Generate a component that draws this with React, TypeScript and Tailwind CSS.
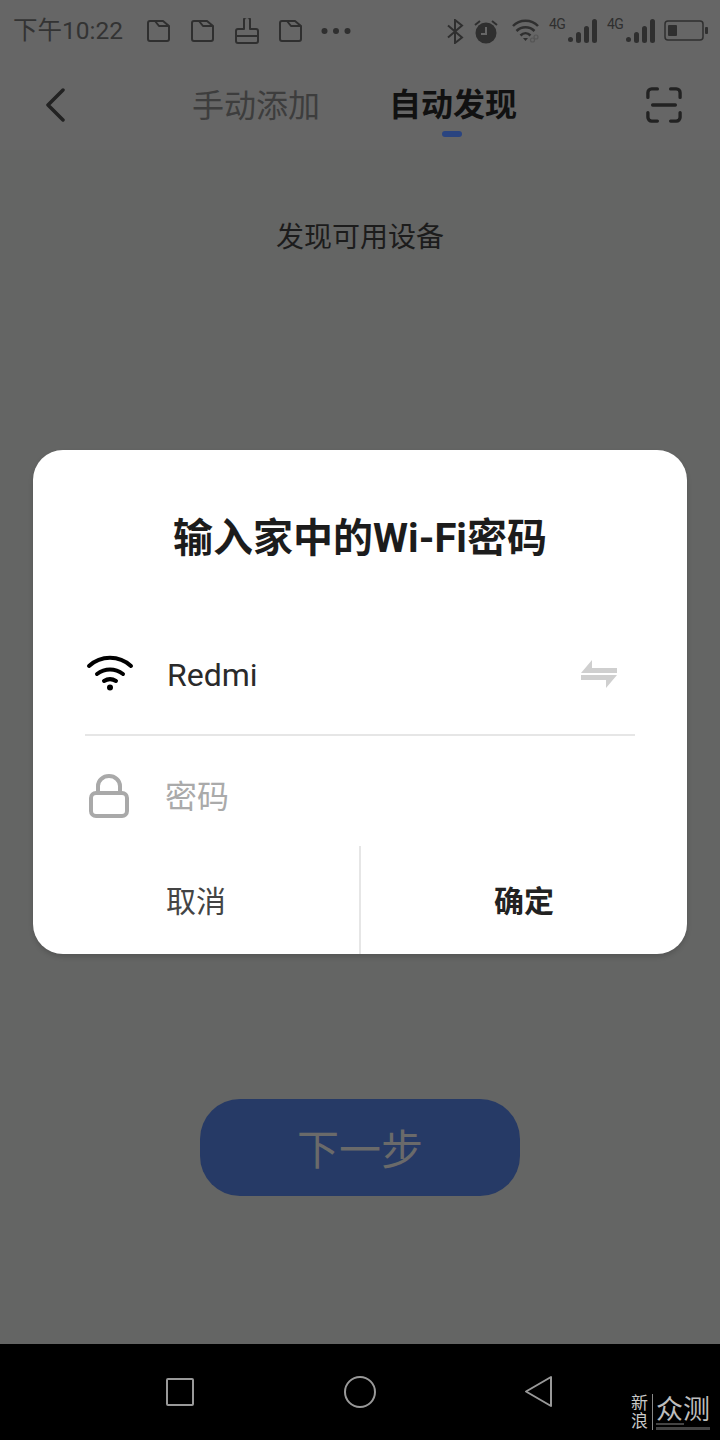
const font = "[font-family:Roboto,'Noto_Sans_CJK_SC',sans-serif]"

function Folder() {
  return (
    <svg width="24" height="22" viewBox="0 0 24 22" fill="none" stroke="#2f2f2f" strokeWidth="2" strokeLinejoin="round">
      <path d="M3 1h13l6 5v13a2 2 0 0 1-2 2H3a2 2 0 0 1-2-2V3a2 2 0 0 1 2-2z" />
      <path d="M8 1l4 5h10" />
    </svg>
  )
}

function Brush() {
  return (
    <svg width="24" height="26" viewBox="0 0 24 26" fill="none" stroke="#2f2f2f" strokeWidth="2" strokeLinejoin="round">
      <path d="M9 2a3 3 0 0 1 6 0v9h6a2 2 0 0 1 2 2v10a2 2 0 0 1-2 2H3a2 2 0 0 1-2-2V13a2 2 0 0 1 2-2h6z" />
      <path d="M1 18h22" />
    </svg>
  )
}

function Signal() {
  return (
    <svg width="29" height="24" viewBox="0 0 29 24" fill="#2f2f2f">
      <circle cx="2.500" cy="20.500" r="2.500" />
      <rect x="8" y="13" width="5" height="11" rx="2.500" />
      <rect x="16" y="7" width="5" height="17" rx="2.500" />
      <rect x="24" y="0" width="5" height="24" rx="2.500" />
    </svg>
  )
}

function Four() {
  return <span className="mr-[3px] w-[16px] -translate-y-[7px] text-[14px] leading-none tracking-[-0.5px] text-[#2f2f2f]">4G</span>
}

function StatusBar() {
  return (
    <div className="flex h-[60px] items-center justify-between bg-[#666] pl-[13px] pr-[12px] pt-[2px]">
      <div className="flex items-center gap-[20px]">
        <span className="mr-[4px] text-[24.5px] leading-none text-[#333]">下午10:22</span>
        <Folder />
        <Folder />
        <Brush />
        <Folder />
        <svg width="30" height="8" viewBox="0 0 30 8" fill="#2f2f2f" className="-ml-[2px]">
          <circle cx="3.500" cy="4" r="3" />
          <circle cx="15" cy="4" r="3" />
          <circle cx="26.500" cy="4" r="3" />
        </svg>
      </div>
      <div className="flex items-center">
        <svg width="18" height="25" viewBox="0 0 18 25" fill="none" stroke="#2f2f2f" strokeWidth="2">
          <path d="M2 6.500l14 12L9 24V1l7 5.500L2 18.500" />
        </svg>
        <svg width="24" height="25" viewBox="0 0 24 25" className="ml-[10px]">
          <circle cx="12" cy="14" r="10.500" fill="#2f2f2f" />
          <path d="M12 8v7H7" fill="none" stroke="#666" strokeWidth="2" />
          <path d="M1 6l5-4M23 6l-5-4" stroke="#2f2f2f" strokeWidth="2" />
        </svg>
        <svg width="28" height="24" viewBox="0 0 28 24" fill="none" stroke="#2f2f2f" strokeWidth="2.500" className="ml-[14px] mr-[9px]">
          <path d="M1 7c6.500-7 18.500-7 25 0" />
          <path d="M4.500 12c5-5 13-5 18 0" />
          <path d="M8.500 16.500c3-3 7-3 10 0" />
          <path d="M11 19h5l-2.500 3z" fill="#2f2f2f" stroke="none" />
          <circle cx="20.500" cy="21" r="2" stroke="#555" strokeWidth="1.200" />
          <circle cx="24" cy="18" r="2" stroke="#555" strokeWidth="1.200" />
        </svg>
        <Four />
        <Signal />
        <span className="ml-[10px] flex items-center">
          <Four />
        </span>
        <Signal />
        <svg width="44" height="22" viewBox="0 0 44 22" fill="none" className="ml-[9px]">
          <rect x="1" y="1" width="38" height="19" rx="3" stroke="#2f2f2f" strokeWidth="1.500" />
          <rect x="4" y="5" width="9" height="11" rx="1" fill="#2f2f2f" />
          <rect x="41" y="7" width="3" height="7" rx="1" fill="#2f2f2f" />
        </svg>
      </div>
    </div>
  )
}

function Header() {
  return (
    <div className="relative flex h-[90px] items-center bg-[#666] pl-[46px] pr-[38px]">
      <svg width="20" height="34" viewBox="0 0 20 34" fill="none" stroke="#222" strokeWidth="3.500" strokeLinecap="round" strokeLinejoin="round">
        <path d="M17 2L2 17l15 15" />
      </svg>
      <div className="ml-[126px] mt-[2px] flex items-center gap-[69px]">
        <span className="text-[32px] leading-none text-[#3d3d3d]">手动添加</span>
        <div className="relative">
          <span className="text-[32px] font-bold leading-none text-[#111]">自动发现</span>
          <div className="absolute left-[53px] top-[42px] h-[6px] w-[20px] rounded-full bg-[#2a4480]" />
        </div>
      </div>
      <svg width="36" height="36" viewBox="0 0 38 38" fill="none" stroke="#222" strokeWidth="3.500" strokeLinecap="round" strokeLinejoin="round" className="ml-auto">
        <path d="M2 11V6a4 4 0 0 1 4-4h6M26 2h6a4 4 0 0 1 4 4v5M2 27v5a4 4 0 0 0 4 4h6M26 36h6a4 4 0 0 0 4-4v-5M7 19h24" />
      </svg>
    </div>
  )
}

function Dialog() {
  return (
    <div className="absolute inset-x-0 top-[450px] flex justify-center">
      <div className="w-[654px] rounded-[30px] bg-white shadow-[0_3px_5px_rgba(0,0,0,0.15)]">
        <div className="pt-[66px] text-center text-[40px] font-bold leading-[46px] text-[#1c1c1c]">输入家中的Wi-Fi密码</div>
        <div className="mx-[52px] mt-[62px] flex h-[112px] items-center border-b-2 border-[#e6e6e6] pb-[10px]">
          <svg width="48" height="36" viewBox="0 0 48 36" fill="none" stroke="#000" strokeWidth="4" strokeLinecap="round" className="-mt-[2px] ml-[1px]">
            <path d="M3 11c12-11 30-11 42 0" />
            <path d="M11 19c8-6 18-6 26 0" />
            <path d="M18 26c4-2.500 8-2.500 12 0" />
            <circle cx="24" cy="32.500" r="3" fill="#000" stroke="none" />
          </svg>
          <span className="ml-[33px] mt-[2px] text-[32px] leading-none text-[#2a2a2a]">Redmi</span>
          <svg width="38" height="30" viewBox="0 0 38 30" fill="#cfcfcf" className="ml-auto mr-[17px]">
            <path d="M12 1v8h25v5H1zM26 29v-8H1v-5h36z" />
          </svg>
        </div>
        <div className="mx-[56px] flex h-[110px] items-center pt-[10px]">
          <svg width="40" height="44" viewBox="0 0 40 44" fill="none" stroke="#a9a9a9" strokeWidth="4">
            <rect x="2" y="19" width="36" height="23" rx="5" />
            <path d="M9 19v-7a11 10 0 0 1 22 0v7" />
          </svg>
          <span className="ml-[36px] mt-[2px] text-[32px] leading-none text-[#aaa]">密码</span>
        </div>
        <div className="flex h-[108px]">
          <div className="flex w-[326px] items-center justify-center pt-[2px] text-[30px] text-[#444]">取消</div>
          <div className="w-[2px] bg-[#e6e6e6]" />
          <div className="flex flex-1 items-center justify-center pt-[2px] text-[30px] font-bold text-[#222]">确定</div>
        </div>
      </div>
    </div>
  )
}

function NavBar() {
  return (
    <div className="relative flex h-[96px] items-center bg-black">
      <div className="ml-[166px] size-[28px] rounded-[2px] border-2 border-[#999]" />
      <div className="ml-[150px] size-[32px] rounded-full border-2 border-[#999]" />
      <svg width="30" height="34" viewBox="0 0 30 34" fill="none" stroke="#999" strokeWidth="2" strokeLinejoin="round" className="ml-[148px]">
        <path d="M27 2v29L2 16.500z" />
      </svg>
      <div className="absolute bottom-[10px] left-[631px] flex items-stretch text-[#c9c9c9]">
        <div className="flex w-[18px] flex-col text-[17px] leading-[18px]">
          <span>新</span>
          <span>浪</span>
        </div>
        <div className="mx-[3px] w-px bg-[#888]" />
        <div className="flex flex-col">
          <span className="pt-[2px] text-[27px] leading-[28px] text-[#bdbdbd]">众测</span>
          <div className="-mt-[1px] h-[2px] w-[28px] bg-[#444]" />
          <div className="mt-[2px] h-[3px] bg-[#444]" />
        </div>
      </div>
    </div>
  )
}

export default function App() {
  return (
    <div className={`relative flex h-[1440px] w-[720px] flex-col overflow-hidden bg-[#646564] ${font}`}>
      <StatusBar />
      <Header />
      <div className="flex flex-1 flex-col items-center">
        <div className="mt-[72px] text-[28px] leading-[32px] text-[#1c1c1c]">发现可用设备</div>
        <div className="mt-[845px] flex h-[97px] w-[320px] items-center justify-center rounded-[40px] bg-[#263a66] pt-[6px] text-[42px] text-[#6a6a6a]">
          下一步
        </div>
      </div>
      <NavBar />
      <Dialog />
    </div>
  )
}
